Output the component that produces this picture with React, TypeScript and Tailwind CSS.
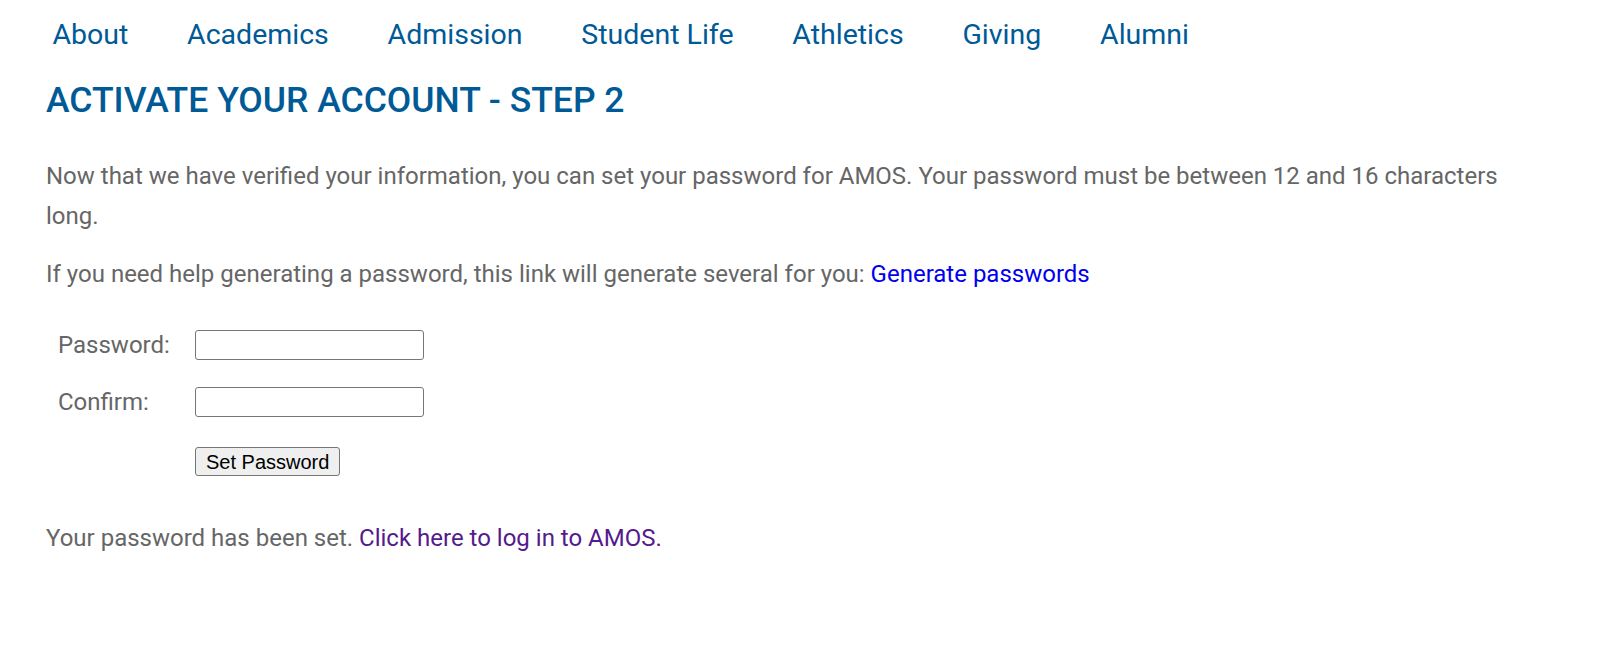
import React from 'react';

const navItems = ['About', 'Academics', 'Admission', 'Student Life', 'Athletics', 'Giving', 'Alumni'];

const App: React.FC = () => {
  return (
    <div className="min-h-[645px] bg-white font-['Roboto',sans-serif] text-[#666666]">
      {/* Top navigation */}
      <nav className="flex pl-[23px] pt-[15px]">
        {navItems.map((item) => (
          <a key={item} href="#" className="px-[29.4px] text-[28.5px] leading-[40px] text-[#005a96]">
            {item}
          </a>
        ))}
      </nav>

      <main className="pl-[46px] pr-[100px]">
        <h1 className="mt-[22px] text-[35.5px] font-medium leading-[46px] text-[#005a96]">
          ACTIVATE YOUR ACCOUNT - STEP 2
        </h1>

        <p className="mt-[33px] text-[24px] leading-[40px]">
          Now that we have verified your information, you can set your password for AMOS. Your password must be between 12 and
          16 characters long.
        </p>
        <p className="mt-[18px] text-[24px] leading-[40px]">
          If you need help generating a password, this link will generate several for you:{' '}
          <a href="#" className="text-[#0000ee]">Generate passwords</a>
        </p>

        {/* Password form */}
        <div className="mt-[36px] grid grid-cols-[137px_auto] items-center pl-[12px]">
          <label className="text-[24px] leading-[30px]">Password:</label>
          <input type="password" className="h-[30px] w-[229px] rounded-[3px] border border-[#767676] bg-white" />
          <label className="mt-[27px] text-[24px] leading-[30px]">Confirm:</label>
          <input type="password" className="mt-[27px] h-[30px] w-[229px] rounded-[3px] border border-[#767676] bg-white" />
          <div />
          <div className="mt-[30px]">
            <button className="h-[29px] rounded-[3px] border border-[#767676] bg-[#efefef] px-[10px] font-['Liberation_Sans',sans-serif] text-[20px] leading-[26px] text-black">
              Set Password
            </button>
          </div>
        </div>

        <p className="mt-[42px] text-[24px] leading-[40px]">
          Your password has been set.{' '}
          <a href="#" className="text-[#551a8b]">Click here to log in to AMOS.</a>
        </p>
      </main>
    </div>
  );
};

export default App;
